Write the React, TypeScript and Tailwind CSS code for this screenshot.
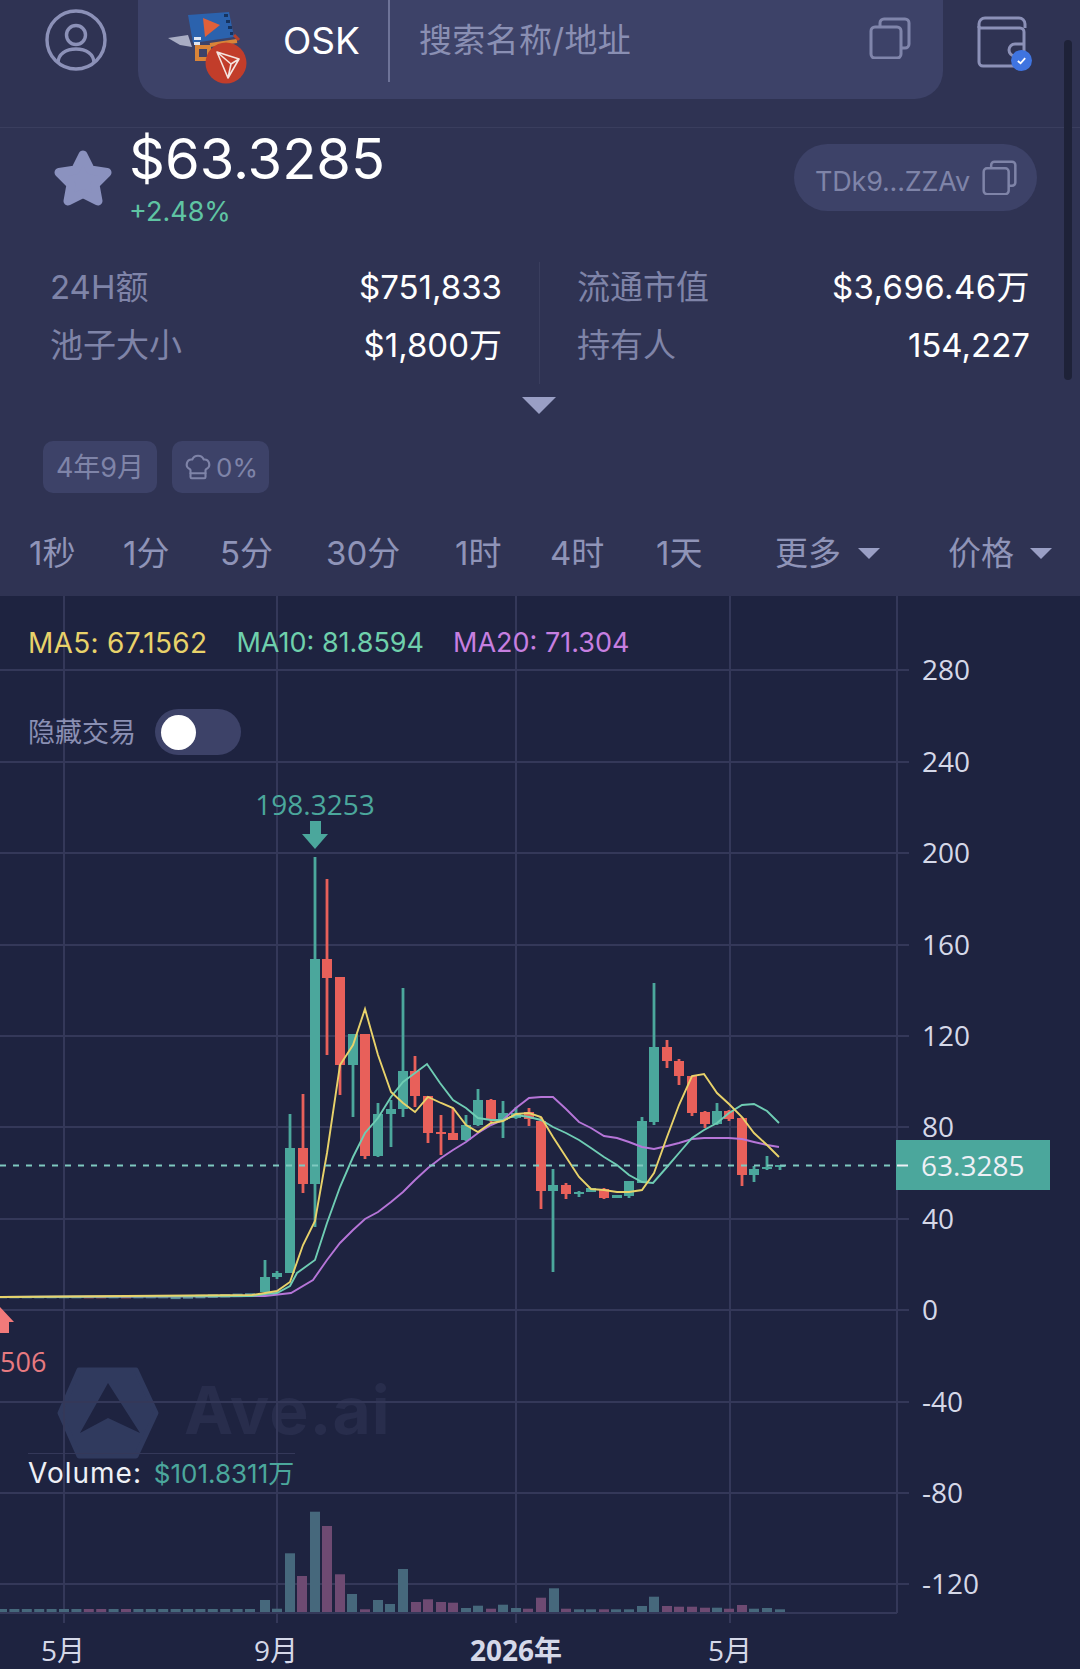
import React from 'react';
import { ChefHat } from 'lucide-react';

const GREEN = '#4ba79c';
const RED = '#e8605a';

// x, wick top, wick bottom, body top, body bottom, colour
const candles: [number, number, number, number, number, 'g' | 'r'][] = [
  [265, 1260, 1292, 1277, 1292, 'g'],
  [277, 1271, 1279, 1273, 1277, 'g'],
  [290, 1114, 1273, 1148, 1273, 'g'],
  [303, 1094, 1193, 1148, 1184, 'r'],
  [315, 857, 1227, 959, 1184, 'g'],
  [327, 879, 1055, 959, 978, 'r'],
  [340, 977, 1095, 977, 1065, 'r'],
  [353, 1034, 1117, 1034, 1065, 'g'],
  [365, 1034, 1159, 1034, 1156, 'r'],
  [378, 1103, 1157, 1114, 1156, 'g'],
  [391, 1100, 1147, 1109, 1114, 'g'],
  [403, 988, 1117, 1071, 1109, 'g'],
  [415, 1056, 1107, 1071, 1096, 'r'],
  [428, 1096, 1143, 1096, 1133, 'r'],
  [441, 1115, 1155, 1132, 1134, 'r'],
  [453, 1108, 1140, 1133, 1140, 'r'],
  [466, 1115, 1141, 1125, 1140, 'g'],
  [478, 1089, 1126, 1100, 1125, 'g'],
  [491, 1099, 1122, 1100, 1120, 'r'],
  [503, 1101, 1138, 1113, 1120, 'g'],
  [516, 1107, 1119, 1113, 1118, 'g'],
  [529, 1108, 1126, 1112, 1119, 'r'],
  [541, 1117, 1209, 1121, 1191, 'r'],
  [553, 1169, 1272, 1185, 1191, 'g'],
  [566, 1183, 1199, 1185, 1194, 'r'],
  [579, 1191, 1197, 1192, 1194, 'g'],
  [591, 1188, 1192, 1188, 1192, 'g'],
  [604, 1188, 1199, 1189, 1198, 'r'],
  [617, 1195, 1198, 1195, 1198, 'g'],
  [629, 1181, 1198, 1181, 1196, 'g'],
  [642, 1117, 1183, 1121, 1183, 'g'],
  [654, 983, 1125, 1047, 1122, 'g'],
  [667, 1040, 1068, 1047, 1061, 'r'],
  [679, 1059, 1085, 1061, 1076, 'r'],
  [692, 1076, 1116, 1076, 1113, 'r'],
  [705, 1111, 1128, 1112, 1124, 'r'],
  [717, 1103, 1125, 1111, 1124, 'g'],
  [729, 1110, 1121, 1111, 1119, 'r'],
  [742, 1117, 1186, 1118, 1175, 'r'],
  [754, 1166, 1182, 1169, 1175, 'g'],
  [767, 1156, 1170, 1167, 1169, 'g'],
  [780, 1165, 1170, 1165, 1167, 'g'],
];

const ma5 =
  '0,1297 252,1295 265,1293 277,1291 290,1282 303,1245 315,1221 327,1153 340,1065 353,1045 365,1009 378,1055 391,1092 403,1103 415,1112 428,1097 441,1103 453,1108 466,1125 478,1132 491,1123 503,1121 516,1114 529,1113 541,1117 553,1137 566,1157 579,1177 591,1189 604,1190 617,1192 629,1192 642,1190 654,1173 667,1137 679,1105 692,1076 704,1074 717,1093 729,1104 742,1117 754,1133 767,1145 779,1157';
const ma10 =
  '0,1297 252,1296 265,1294 277,1293 290,1286 297,1273 315,1260 327,1223 340,1187 353,1157 365,1133 378,1118 391,1097 403,1082 415,1073 427,1064 440,1083 453,1100 466,1108 478,1118 491,1120 503,1120 516,1115 529,1117 541,1120 553,1127 566,1133 579,1140 591,1148 604,1157 617,1165 629,1175 642,1182 653,1183 667,1167 679,1153 692,1138 704,1130 717,1123 729,1113 742,1105 754,1104 767,1111 779,1123';
const ma20 =
  '0,1297 265,1296 291,1293 313,1280 327,1260 340,1243 353,1230 365,1219 378,1212 391,1202 403,1192 415,1180 428,1168 441,1158 453,1150 466,1142 478,1133 491,1125 503,1120 516,1108 529,1098 541,1097 553,1097 566,1109 579,1122 591,1128 604,1136 617,1138 629,1142 642,1147 654,1149 667,1146 679,1143 692,1139 704,1138 717,1138 729,1138 742,1139 754,1142 767,1145 779,1147';

// x, height, colour of the volume bars right of the flat part
const volumes: [number, number, 'g' | 'r'][] = [
  [265, 12, 'g'], [277, 3.3, 'g'], [290, 58.7, 'g'], [302, 36, 'r'], [315, 100.3, 'g'], [327, 86, 'r'],
  [340, 37.7, 'r'], [352, 18, 'g'], [365, 2.7, 'r'], [378, 12, 'g'], [390, 8, 'g'], [403, 43, 'g'],
  [416, 10, 'r'], [428, 12.7, 'r'], [441, 10, 'r'], [453, 9.3, 'r'], [466, 4, 'g'], [478, 6.3, 'g'],
  [491, 3.3, 'r'], [503, 7.3, 'g'], [516, 4, 'g'], [528, 3.3, 'r'], [541, 14.3, 'r'], [554, 23.7, 'g'],
  [566, 3.3, 'r'], [579, 2.7, 'g'], [591, 2.7, 'g'], [604, 2.7, 'r'], [616, 2.7, 'g'], [629, 2.7, 'g'],
  [642, 6, 'g'], [654, 15.3, 'g'], [667, 6, 'r'], [679, 5.3, 'r'], [692, 5.3, 'r'], [705, 4.3, 'r'],
  [717, 4.3, 'g'], [729, 3.3, 'r'], [742, 7, 'r'], [754, 3.3, 'g'], [767, 4, 'g'], [780, 2.7, 'g'],
];

const flatX = Array.from({ length: 21 }, (_, i) => 2 + i * 12.4);
const flatRed = [26, 51, 89, 101, 126];

const yTicks: [string, number][] = [
  ['280', 670], ['240', 762], ['200', 853], ['160', 945], ['120', 1036], ['80', 1127],
  ['40', 1219], ['0', 1310], ['-40', 1402], ['-80', 1493], ['-120', 1584],
];
const xTicks: [string, number, boolean][] = [
  ['5月', 63, false], ['9月', 276, false], ['2026年', 516, true], ['5月', 730, false],
];

const timeframes = [
  { label: '1秒', cls: 'w-[94px]' },
  { label: '1分', cls: 'w-[97px]' },
  { label: '5分', cls: 'w-[106px]' },
  { label: '30分', cls: 'w-[129px]' },
  { label: '1时', cls: 'w-[95px]' },
  { label: '4时', cls: 'w-[106px]' },
  { label: '1天', cls: 'w-[119px]' },
];

const CopyIcon = ({ className }: { className: string }) => (
  <svg viewBox="0 0 42 42" fill="none" stroke="currentColor" strokeWidth="3" className={className}>
    <path d="M11 9V6a4 4 0 0 1 4-4h21a4 4 0 0 1 4 4v21a4 4 0 0 1-4 4h-4" />
    <rect x="2" y="10" width="30" height="31" rx="4" />
  </svg>
);

const TokenLogo = () => (
  <svg viewBox="0 0 100 85" className="w-[100px] h-[85px] mt-[12px] ml-[22px] shrink-0">
    <path d="M8 33 28 30 32 42 20 40Z" fill="#a9adc4" />
    <path d="M28 10 69 7 74 32 33 38Z" fill="#2b62ad" />
    <path d="M64 9h4v3h-4zM66 15h4v3h-4zM68 21h4v3h-4zM70 27h3v3h-3z" fill="#16335f" />
    <path d="M43 13 60 20 45 32Z" fill="#e0603a" />
    <path d="M34 32h7v3h-7zM34 37h6v3h-6z" fill="#dfe6f2" />
    <path d="M37 42h12v12H37zM50 40l27-4" fill="none" stroke="#d98438" strokeWidth="4" />
    <path d="M74 30 79 35" stroke="#b8402a" strokeWidth="3" />
    <circle cx="66" cy="58" r="20.5" fill="#c23d2a" />
    <path d="M57 47 79 54 68 73ZM57 47 71 59 79 54M71 59 68 73" fill="none" stroke="#f5e4df" strokeWidth="1.6" strokeLinejoin="round" />
  </svg>
);

const UserIcon = () => (
  <svg viewBox="0 0 62 62" fill="none" stroke="#8c91b8" strokeWidth="3.4" className="w-[62px] h-[62px]">
    <circle cx="31" cy="31" r="29" />
    <circle cx="31" cy="26" r="9.5" />
    <path d="M13 54c0-9 8-14 18-14s18 5 18 14" />
  </svg>
);

const WalletIcon = () => (
  <div className="relative w-[56px] h-[56px]">
    <svg viewBox="0 0 52 52" fill="none" stroke="#8c91b8" strokeWidth="3" className="w-[52px] h-[52px]">
      <path d="M2 12V8a6 6 0 0 1 6-6h34a6 6 0 0 1 6 6v4" />
      <path d="M2 10v36a4 4 0 0 0 4 4h36a5 5 0 0 0 5-5V16a4 4 0 0 0-4-4H2" />
      <path d="M48 28H38a6 6 0 0 0 0 12h10" />
    </svg>
    <div className="absolute right-[1px] bottom-[1px] w-[21px] h-[21px] rounded-full bg-[#3f74e0] flex items-center justify-center">
      <svg viewBox="0 0 12 12" fill="none" stroke="#fff" strokeWidth="2" className="w-[11px] h-[11px]">
        <path d="M2 6.5 5 9l5-5.5" />
      </svg>
    </div>
  </div>
);

const Chart = () => (
  <svg viewBox="0 596 1080 1073" className="absolute inset-0 w-[1080px] h-[1073px]">
    {/* watermark */}
    <path d="M79 1370H136L156 1413 136 1456H79L60 1413Z" fill="#303a5e" stroke="#303a5e" strokeWidth="5" strokeLinejoin="round" />
    <path d="M108 1383 140 1433 108 1418 80 1433Z" fill="#1e2340" />
    <text x="184" y="1434" fontSize="66" fontWeight="700" letterSpacing="1" fill="#282d4c">Ave.ai</text>

    {yTicks.map(([, y]) => (
      <line key={y} x1="0" x2="909" y1={y} y2={y} stroke="#343859" strokeWidth="2" />
    ))}
    {[64, 277, 516, 730].map((x) => (
      <line key={x} x1={x} x2={x} y1="596" y2="1623" stroke="#343859" strokeWidth="2" />
    ))}
    <line x1="897" x2="897" y1="596" y2="1613" stroke="#343859" strokeWidth="2" />
    <line x1="0" x2="897" y1="1613" y2="1613" stroke="#343859" strokeWidth="2" />

    {/* volume */}
    {flatX.map((x) => (
      <rect key={x} x={x - 5} y="1609" width="10" height="3" fill={flatRed.includes(Math.round(x)) ? '#6e4a72' : '#46687c'} />
    ))}
    {volumes.map(([x, h, c]) => (
      <rect key={x} x={x - 5} y={1612 - h} width="10" height={h} fill={c === 'g' ? '#46687c' : '#6e4a72'} />
    ))}

    {/* flat candles */}
    {flatX.map((x, i) => (
      <rect key={x} x={x - 5} y={i > 13 ? 1296 - (i - 13) * 0.4 : 1296} width="10" height={i > 13 ? 3.5 : 2.5}
        fill={flatRed.includes(Math.round(x)) ? RED : '#5f9aa0'} opacity={i > 13 ? 0.9 : 0.55} />
    ))}
    {candles.map(([x, wt, wb, bt, bb, c]) => (
      <g key={x} fill={c === 'g' ? GREEN : RED}>
        <rect x={x - 1.4} y={wt} width="2.8" height={wb - wt} />
        <rect x={x - 5} y={bt} width="10" height={bb - bt} />
      </g>
    ))}

    {/* moving averages */}
    <polyline points={ma20} fill="none" stroke="#b675d8" strokeWidth="1.9" />
    <polyline points={ma10} fill="none" stroke="#6fcdb4" strokeWidth="1.9" />
    <polyline points={ma5} fill="none" stroke="#e8d26a" strokeWidth="1.9" />

    {/* last price */}
    <line x1="0" x2="896" y1="1165.5" y2="1165.5" stroke="#7fc9c0" strokeWidth="2" strokeDasharray="6 7" />
    <rect x="896" y="1140" width="154" height="50" fill={GREEN} />
    <line x1="897" x2="908" y1="1165.5" y2="1165.5" stroke="#eef0f6" strokeWidth="2" />
    <text x="921" y="1175.5" fontSize="28" fill="#eef0f6" fontFamily="'Open Sans', sans-serif">63.3285</text>

    {/* high and low marks */}
    <text x="315" y="815" fontSize="28" textAnchor="middle" fill={GREEN} fontFamily="'Open Sans', sans-serif">198.3253</text>
    <path d="M310 821h11v13h7l-13 15-13-15h8Z" fill={GREEN} />
    <path d="M0 1307 14 1322H9v11H0Z" fill="#f27a7a" />
    <text x="0" y="1372" fontSize="27" fill="#e87a80" fontFamily="'Open Sans', sans-serif">506</text>

    {/* axes */}
    {yTicks.map(([t, y]) => (
      <text key={t} x="922" y={y + 10} fontSize="28" fill="#d5d8e8" fontFamily="'Open Sans', sans-serif">{t}</text>
    ))}
    {xTicks.map(([t, x, bold]) => (
      <text key={x} x={x} y="1661" fontSize="28" textAnchor="middle" fontWeight={bold ? 700 : 400} fill="#d5d8e8"
        fontFamily="'Open Sans', 'Noto Sans CJK SC', sans-serif">{t}</text>
    ))}
  </svg>
);

const App: React.FC = () => {
  return (
    <div className="relative w-[1080px] h-[1669px] overflow-hidden bg-[#2f3353] font-['Inter','Noto_Sans_CJK_SC',sans-serif]">
      {/* scrollbar */}
      <div className="absolute left-[1064px] top-[40px] w-[8px] h-[340px] rounded-full bg-[#1e2238]" />

      {/* Top bar */}
      <div className="flex items-start h-[128px] border-b border-[#3a3e5e]">
        <div className="ml-[45px] mt-[9px]">
          <UserIcon />
        </div>
        <div className="ml-[31px] w-[805px] h-[99px] pb-[17px] bg-[#3d4268] rounded-b-[28px] flex items-center">
          <TokenLogo />
          <span className="ml-[23px] text-[37px] text-white w-[105px]">OSK</span>
          <div className="w-[2px] h-[82px] bg-[#6e7398]" />
          <span className="ml-[29px] text-[33px] tracking-[0.3px] text-[#8a8fb3]">搜索名称/地址</span>
          <CopyIcon className="ml-auto mr-[32px] -mt-[6px] w-[42px] h-[42px] text-[#8085ab]" />
        </div>
        <div className="ml-[34px] mt-[16px]">
          <WalletIcon />
        </div>
      </div>

      {/* Price */}
      <div className="flex items-start h-[129px] pl-[53px]">
        <svg viewBox="0 0 60 58" className="w-[60px] h-[58px] mt-[21px] shrink-0">
          <path d="M30 6 37.5 21 54 23.5 42 35.5 45 52 30 44.5 15 52 18 35.5 6 23.5 22.5 21Z" fill="#8b92bf" stroke="#8b92bf" strokeWidth="9" strokeLinejoin="round" />
        </svg>
        <div className="ml-[16px]">
          <div className="text-[56px] leading-[58px] mt-[2px] text-white">$63.3285</div>
          <div className="text-[27px] leading-[34px] mt-[7px] text-[#5fc4a3]">+2.48%</div>
        </div>
        <div className="ml-auto mr-[43px] mt-[16px] w-[243px] h-[67px] rounded-full bg-[#3d4268] flex items-center pl-[21px] pr-[20px]">
          <span className="text-[27px] mt-[9px] text-[#7f84a8] tracking-[-0.2px]">TDk9...ZZAv</span>
          <CopyIcon className="ml-auto w-[35px] h-[35px] text-[#7f84a8]" />
        </div>
      </div>

      {/* Stats */}
      <div className="flex h-[120px] pl-[50px] pr-[50px] pt-[1px]">
        <div className="w-[452px] grid grid-cols-[auto_auto] content-start justify-between text-[33px] leading-[58px]">
          <span className="text-[#7f84a8]">24H额</span>
          <span className="text-white text-right">$751,833</span>
          <span className="text-[#7f84a8]">池子大小</span>
          <span className="text-white text-right">$1,800万</span>
        </div>
        <div className="ml-[37px] w-px h-[122px] mt-[4px] bg-[#3a3e5e]" />
        <div className="ml-[37px] flex-1 grid grid-cols-[auto_auto] content-start justify-between text-[33px] leading-[58px]">
          <span className="text-[#7f84a8]">流通市值</span>
          <span className="text-white text-right tracking-[0.4px]">$3,696.46万</span>
          <span className="text-[#7f84a8]">持有人</span>
          <span className="text-white text-right">154,227</span>
        </div>
      </div>

      <div className="flex justify-center pt-[20px] pr-[2px] h-[37px]">
        <div className="w-0 h-0 border-l-[17px] border-r-[17px] border-t-[17px] border-l-transparent border-r-transparent border-t-[#9a9fc5]" />
      </div>

      {/* Tags */}
      <div className="flex gap-[15px] mt-[27px] pl-[43px] h-[52px]">
        <div className="w-[114px] pt-[2px] rounded-[10px] bg-[#3d4268] flex items-center justify-center text-[27px] text-[#7f84a8]">4年9月</div>
        <div className="w-[97px] rounded-[10px] bg-[#3d4268] flex items-center pl-[11px] gap-[3px] text-[26px] text-[#7f84a8]">
          <ChefHat size={30} strokeWidth={1.7} />
          <span>0%</span>
        </div>
      </div>

      {/* Timeframes */}
      <div className="flex items-center h-[103px] pt-[18px] pl-[29px] text-[33px] text-[#8f94b8]">
        {timeframes.map((t) => (
          <span key={t.label} className={t.cls}>{t.label}</span>
        ))}
        <span>更多</span>
        <div className="ml-[17px] w-0 h-0 border-l-[11px] border-r-[11px] border-t-[11px] border-l-transparent border-r-transparent border-t-[#9a9fc5]" />
        <span className="ml-[68px]">价格</span>
        <div className="ml-[16px] w-0 h-0 border-l-[11px] border-r-[11px] border-t-[11px] border-l-transparent border-r-transparent border-t-[#9a9fc5]" />
      </div>

      {/* Chart */}
      <div className="relative h-[1073px] bg-[#1e2340]">
        <Chart />
        <div className="absolute left-[28px] top-[29px] flex items-center gap-[29px] leading-[36px]">
          <span className="text-[28px] tracking-[0.3px] text-[#e8d26a]">MA5: 67.1562</span>
          <span className="text-[27px] text-[#6fd0ac]">MA10: 81.8594</span>
          <span className="text-[27px] text-[#c77fe0]">MA20: 71.304</span>
        </div>
        <div className="absolute left-[28px] top-[113px] flex items-center gap-[19px]">
          <span className="text-[27px] pt-[3px] text-[#8a8fb3]">隐藏交易</span>
          <div className="w-[86px] h-[46px] rounded-full bg-[#3d4268] flex items-center pl-[6px]">
            <div className="w-[35px] h-[35px] rounded-full bg-white" />
          </div>
        </div>
        <div className="absolute left-[28px] top-[857px] w-[267px] border-t border-[#343859] pt-[1px] text-[28px] leading-[36px] whitespace-nowrap">
          <span className="text-[#eef0f6] tracking-[1px]">Volume: </span>
          <span className="ml-[3px] text-[#4ba79c] text-[26px]">$101.8311万</span>
        </div>
      </div>
    </div>
  );
};

export default App;
